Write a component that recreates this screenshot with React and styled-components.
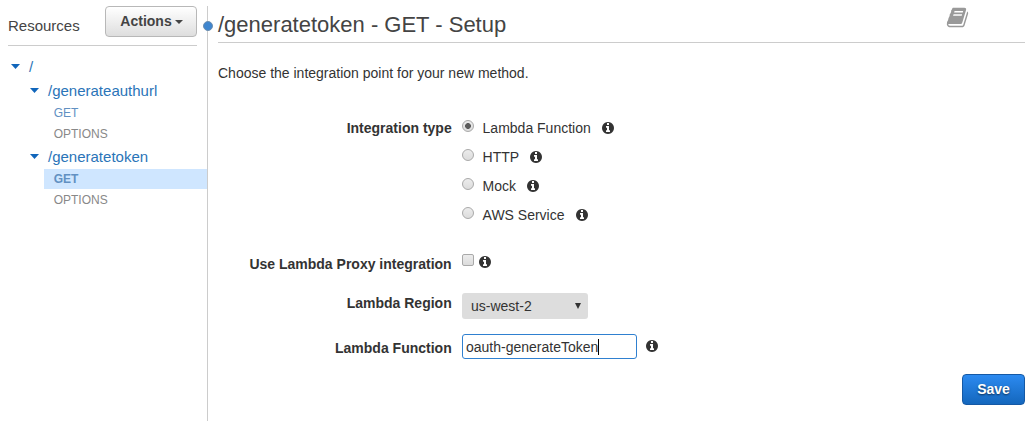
import React from 'react';
import styled, { createGlobalStyle, css } from 'styled-components';

const GlobalStyle = createGlobalStyle`
  * { box-sizing: border-box; }
  body {
    margin: 0;
    background: #fff;
    color: #333;
    font: 14px/20px "Liberation Sans", Arial, sans-serif;
    overflow: hidden;
  }
`;

const Page = styled.div`
  display: flex;
  height: 421px;
  padding-top: 6px;
`;

const Sidebar = styled.aside`
  position: relative;
  flex: none;
  width: 208px;
  padding-left: 8px;
  border-right: 1px solid #ccc;
`;

const ResizeHandle = styled.span`
  position: absolute;
  top: 15px;
  right: -6px;
  width: 10px;
  height: 10px;
  border: 1px solid #6d8fb0;
  border-radius: 50%;
  background: #3f86cf;
`;

const SidebarHeader = styled.header`
  display: flex;
  justify-content: space-between;
  align-items: flex-start;
  width: 189px;
  height: 40px;
  border-bottom: 1px solid #ccc;
`;

const SidebarTitle = styled.span`
  padding-top: 10px;
  font-size: 15px;
  color: #444;
`;

const ActionsButton = styled.button`
  display: flex;
  align-items: center;
  justify-content: center;
  gap: 3px;
  width: 92px;
  height: 31px;
  padding: 0 0 2px 1px;
  border: 1px solid #b8b8b8;
  border-radius: 4px;
  background: linear-gradient(#fff, #dedede);
  color: #444;
  font: bold 14px/20px "Liberation Sans", Arial, sans-serif;
`;

const Caret = styled.span`
  border: solid transparent;
  border-width: 4px 4px 0;
  border-top-color: #444;
  margin-top: 3px;
`;

const Tree = styled.nav`
  padding-top: 9px;
`;

const Resource = styled.div`
  display: flex;
  align-items: center;
  height: 24px;
  padding-left: ${(p) => 3 + p.$level * 19}px;
  color: #2a74b8;
  font-size: 15px;
`;

const Twisty = styled.span`
  flex: none;
  width: 9px;
  height: 5px;
  margin: 0 9px 1px 0;
  background: #1166bb;
  clip-path: polygon(0 0, 100% 0, 50% 100%);
`;

const Method = styled.div`
  height: 20px;
  margin: 0 0 1px 36px;
  padding-left: 9.7px;
  font-size: 12px;
  line-height: 20px;
  color: ${(p) => (p.$muted ? '#888' : '#6190c2')};
  ${(p) => p.$selected && css`
    background: #cfe6ff;
    font-weight: bold;
  `}
`;

const Main = styled.main`
  flex: 1;
  padding: 0 8px 0 10px;
`;

const MainHeader = styled.header`
  display: flex;
  justify-content: space-between;
  height: 37px;
  padding-right: 56px;
  border-bottom: 1px solid #ccc;
`;

const Title = styled.h1`
  margin: 5px 0 0;
  color: #444;
  font-size: 22px;
  line-height: 28px;
  font-weight: normal;
`;

const Intro = styled.p`
  margin: 20px 0 0;
`;

const Form = styled.form`
  padding-top: 35px;
`;

const Field = styled.div`
  display: grid;
  grid-template-columns: 233.7px 1fr;
  column-gap: 10.3px;
  height: ${(p) => p.$height}px;
`;

const Label = styled.label`
  padding-top: ${(p) => p.$top || 0}px;
  text-align: right;
  font-weight: bold;
`;

const Option = styled.label`
  display: flex;
  align-items: center;
  height: 20px;
  margin-bottom: 9px;
`;

const CheckRow = styled.div`
  display: flex;
  align-items: center;
  height: 16px;
`;

const Radio = styled.input`
  appearance: none;
  width: 12px;
  height: 12px;
  margin: 0 8.6px 4px 0;
  border: 1px solid #a9a9a9;
  border-radius: 50%;
  background: ${(p) => (p.defaultChecked ? 'radial-gradient(circle, #5c5c5c 0 2.6px, transparent 3.2px),' : '')}
    linear-gradient(#ececec, #dcdcdc);
`;

const Checkbox = styled.input`
  appearance: none;
  width: 12px;
  height: 12px;
  margin: 0 4px 4px 0;
  border: 1px solid #a9a9a9;
  border-radius: 2px;
  background: linear-gradient(#ececec, #dcdcdc);
`;

const OptionText = styled.span`
  margin-right: 10px;
`;

const Icon = styled.svg`
  flex: none;
  width: ${(p) => p.$size}px;
  height: ${(p) => p.$size}px;
  fill: ${(p) => p.$color || '#333'};
`;

const Select = styled.div`
  display: flex;
  align-items: center;
  justify-content: space-between;
  width: 126px;
  height: 26px;
  padding: 0 7px 0 9px;
  border-radius: 3px;
  background: #ddd;
`;

const SelectArrow = styled.span`
  width: 6px;
  height: 6px;
  background: #333;
  clip-path: polygon(0 0, 100% 0, 50% 100%);
`;

const InputRow = styled.div`
  display: flex;
  align-items: flex-start;
  gap: 7.7px;
  height: 25px;

  > svg { margin-top: 5px; }
`;

const TextInput = styled.div`
  display: flex;
  align-items: center;
  width: 175px;
  height: 25px;
  padding: 1px 3px 0;
  border: 1px solid #2f80d0;
  border-radius: 3px;
`;

const TextCursor = styled.span`
  width: 1px;
  height: 16px;
  background: #000;
`;

const Footer = styled.footer`
  display: flex;
  justify-content: flex-end;
`;

const SaveButton = styled.button`
  width: 63px;
  height: 31px;
  padding: 0 0 2px;
  border: 1px solid #1559a5;
  border-radius: 4px;
  background: linear-gradient(#2c8af0, #1467bd);
  color: #fff;
  font: bold 14px/20px "Liberation Sans", Arial, sans-serif;
  text-shadow: 0 1px 2px rgba(0, 0, 0, 0.6);
`;

const InfoIcon = () => (
  <Icon $size={14} viewBox="0 0 1792 1792">
    <path d="M1152 1376v-160q0-14-9-23t-23-9h-96v-512q0-14-9-23t-23-9h-320q-14 0-23 9t-9 23v160q0 14 9 23t23 9h96v320h-96q-14 0-23 9t-9 23v160q0 14 9 23t23 9h448q14 0 23-9t9-23zm-128-896v-192q0-14-9-23t-23-9h-192q-14 0-23 9t-9 23v192q0 14 9 23t23 9h192q14 0 23-9t9-23zm640 416q0 209-103 385.5t-279.5 279.5-385.5 103-385.5-103-279.5-279.5-103-385.5 103-385.5 279.5-279.5 385.5-103 385.5 103 279.5 279.5 103 385.5z" />
  </Icon>
);

const BookIcon = () => (
  <Icon $size={23} $color="#999" viewBox="0 0 1792 1792">
    <path d="M1703 478q40 57 18 129l-275 906q-19 64-76.5 107.5t-122.5 43.5h-923q-77 0-148.5-53.5t-99.5-131.5q-24-67-2-127 0-4 3-27t4-37q1-8-3-21.5t-3-19.5q2-11 8-21t16.5-23.5 16.5-23.5q23-38 45-91.5t30-91.5q3-10 .5-30t-.5-28q3-11 17-28t17-23q21-36 42-92t25-90q1-9-2.5-32t.5-28q4-13 22-30.5t22-22.5q19-26 42.5-84.5t27.5-96.5q1-8-3-25.5t-2-26.5q2-8 9-18t18-23 17-21q8-12 16.5-30.5t15-35 16-36 19.5-32 26.5-23.5 36-11.5 47.5 5.5l-1 3q38-9 51-9h761q74 0 114 56t18 130l-274 906q-36 119-71.5 153.5t-128.5 34.5h-869q-27 0-38 15-11 16-1 43 24 70 144 70h923q29 0 56-15.5t35-41.5l300-987q7-22 5-57 38 15 59 43zm-1064 2q-4 13 2 22.5t20 9.5h608q13 0 25.5-9.5t16.5-22.5l21-64q4-13-2-22.5t-20-9.5h-608q-13 0-25.5 9.5t-16.5 22.5zm-83 256q-4 13 2 22.5t20 9.5h608q13 0 25.5-9.5t16.5-22.5l21-64q4-13-2-22.5t-20-9.5h-608q-13 0-25.5 9.5t-16.5 22.5z" />
  </Icon>
);

const integrationTypes = ['Lambda Function', 'HTTP', 'Mock', 'AWS Service'];

export default function App() {
  return (
    <>
      <GlobalStyle />
      <Page>
        <Sidebar>
          <SidebarHeader>
            <SidebarTitle>Resources</SidebarTitle>
            <ActionsButton>Actions<Caret /></ActionsButton>
          </SidebarHeader>
          <Tree>
            <Resource $level={0}><Twisty />/</Resource>
            <Resource $level={1}><Twisty />/generateauthurl</Resource>
            <Method>GET</Method>
            <Method $muted>OPTIONS</Method>
            <Resource $level={1}><Twisty />/generatetoken</Resource>
            <Method $selected>GET</Method>
            <Method $muted>OPTIONS</Method>
          </Tree>
          <ResizeHandle />
        </Sidebar>
        <Main>
          <MainHeader>
            <Title>/generatetoken - GET - Setup</Title>
            <BookIcon />
          </MainHeader>
          <Intro>Choose the integration point for your new method.</Intro>
          <Form onSubmit={(e) => e.preventDefault()}>
            <Field $height={136}>
              <Label>Integration type</Label>
              <div>
                {integrationTypes.map((name, i) => (
                  <Option key={name}>
                    <Radio type="radio" name="integration" defaultChecked={i === 0} />
                    <OptionText>{name}</OptionText>
                    <InfoIcon />
                  </Option>
                ))}
              </div>
            </Field>
            <Field $height={39}>
              <Label>Use Lambda Proxy integration</Label>
              <CheckRow>
                <Checkbox type="checkbox" />
                <InfoIcon />
              </CheckRow>
            </Field>
            <Field $height={41}>
              <Label>Lambda Region</Label>
              <Select>us-west-2<SelectArrow /></Select>
            </Field>
            <Field $height={40}>
              <Label $top={4}>Lambda Function</Label>
              <InputRow>
                <TextInput>oauth-generateToken<TextCursor /></TextInput>
                <InfoIcon />
              </InputRow>
            </Field>
          </Form>
          <Footer><SaveButton>Save</SaveButton></Footer>
        </Main>
      </Page>
    </>
  );
}
